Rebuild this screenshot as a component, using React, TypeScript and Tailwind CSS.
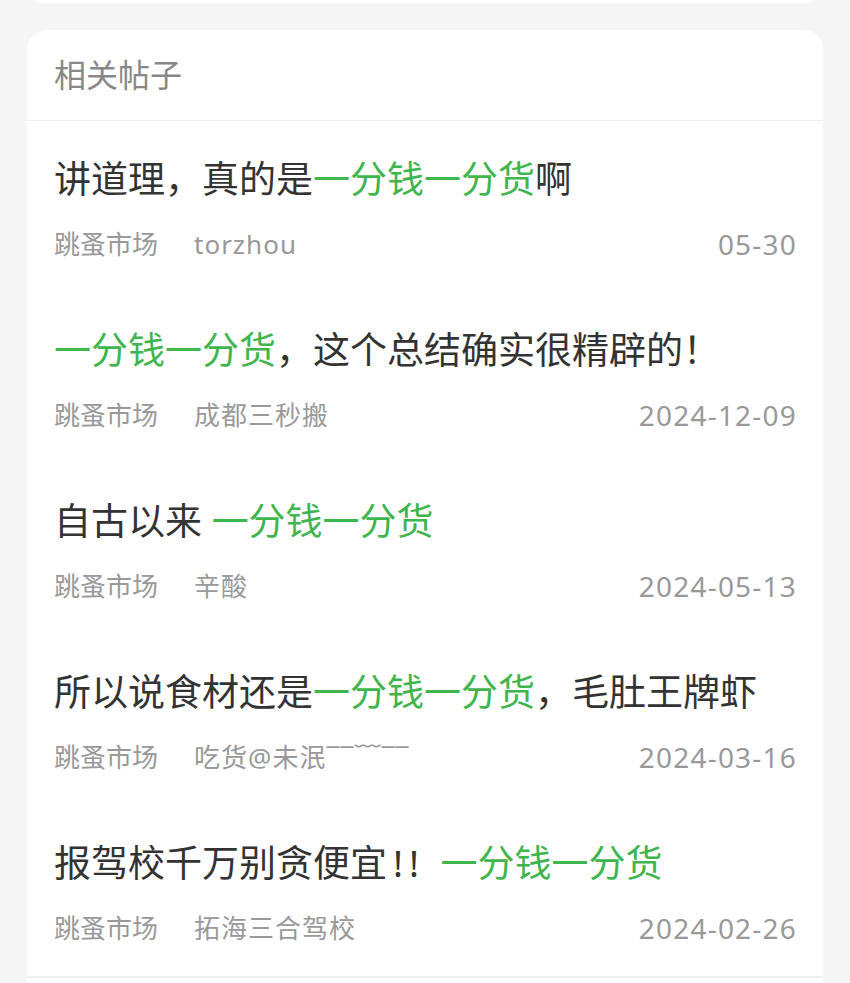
import React from "react";

type Post = {
  parts: { text: string; hl?: boolean }[];
  board: string;
  author: string;
  date: string;
};

const posts: Post[] = [
  {
    parts: [{ text: "讲道理，真的是" }, { text: "一分钱一分货", hl: true }, { text: "啊" }],
    board: "跳蚤市场",
    author: "torzhou",
    date: "05-30",
  },
  {
    parts: [{ text: "一分钱一分货", hl: true }, { text: "，这个总结确实很精辟的！" }],
    board: "跳蚤市场",
    author: "成都三秒搬",
    date: "2024-12-09",
  },
  {
    parts: [{ text: "自古以来 " }, { text: "一分钱一分货", hl: true }],
    board: "跳蚤市场",
    author: "辛酸",
    date: "2024-05-13",
  },
  {
    parts: [{ text: "所以说食材还是" }, { text: "一分钱一分货", hl: true }, { text: "，毛肚王牌虾" }],
    board: "跳蚤市场",
    author: "吃货@未泯¯¯﹋¯¯",
    date: "2024-03-16",
  },
  {
    parts: [{ text: "报驾校千万别贪便宜" }, { text: "!! " }, { text: "一分钱一分货", hl: true }],
    board: "跳蚤市场",
    author: "拓海三合驾校",
    date: "2024-02-26",
  },
];

const PostRow = ({ post }: { post: Post }) => (
  <div className="px-[27px] pt-[34px] pb-[28px]">
    <div className="text-[37px] leading-[48px] text-[#333333] whitespace-nowrap">
      {post.parts.map((p, i) => (
        <span
          key={i}
          className={p.hl ? "text-[#3fb54e]" : p.text.startsWith("!") ? "tracking-[6px] ml-[6px]" : ""}
        >
          {p.text}
        </span>
      ))}
    </div>
    <div className="mt-[21px] flex items-center justify-between text-[26px] leading-[40px] text-[#999999]">
      <div className="flex">
        <span>{post.board}</span>
        <span className="ml-[36px] tracking-[1px]">{post.author}</span>
      </div>
      <span className="text-[28px] tracking-[1.2px] -mr-[1px]">{post.date}</span>
    </div>
  </div>
);

export default function App() {
  return (
    <div
      className="min-h-[983px] bg-[#f5f5f5]"
      style={{ fontFamily: '"Noto Sans", "Noto Sans CJK SC", sans-serif' }}
    >
      <div className="ml-[36px] mr-[38px] h-[3px] rounded-b-[3px] bg-white" />
      <div className="mx-[27px] mt-[27px] rounded-t-[20px] bg-white">
        <div className="flex h-[90px] items-center px-[27px] text-[32px] text-[#888888]">
          相关帖子
        </div>
        <div className="h-px bg-[#efefef]" />
        {posts.map((post, i) => (
          <PostRow key={i} post={post} />
        ))}
        <div className="h-[2px] bg-[#efefef]" />
        <div className="h-[40px]" />
      </div>
    </div>
  );
}
